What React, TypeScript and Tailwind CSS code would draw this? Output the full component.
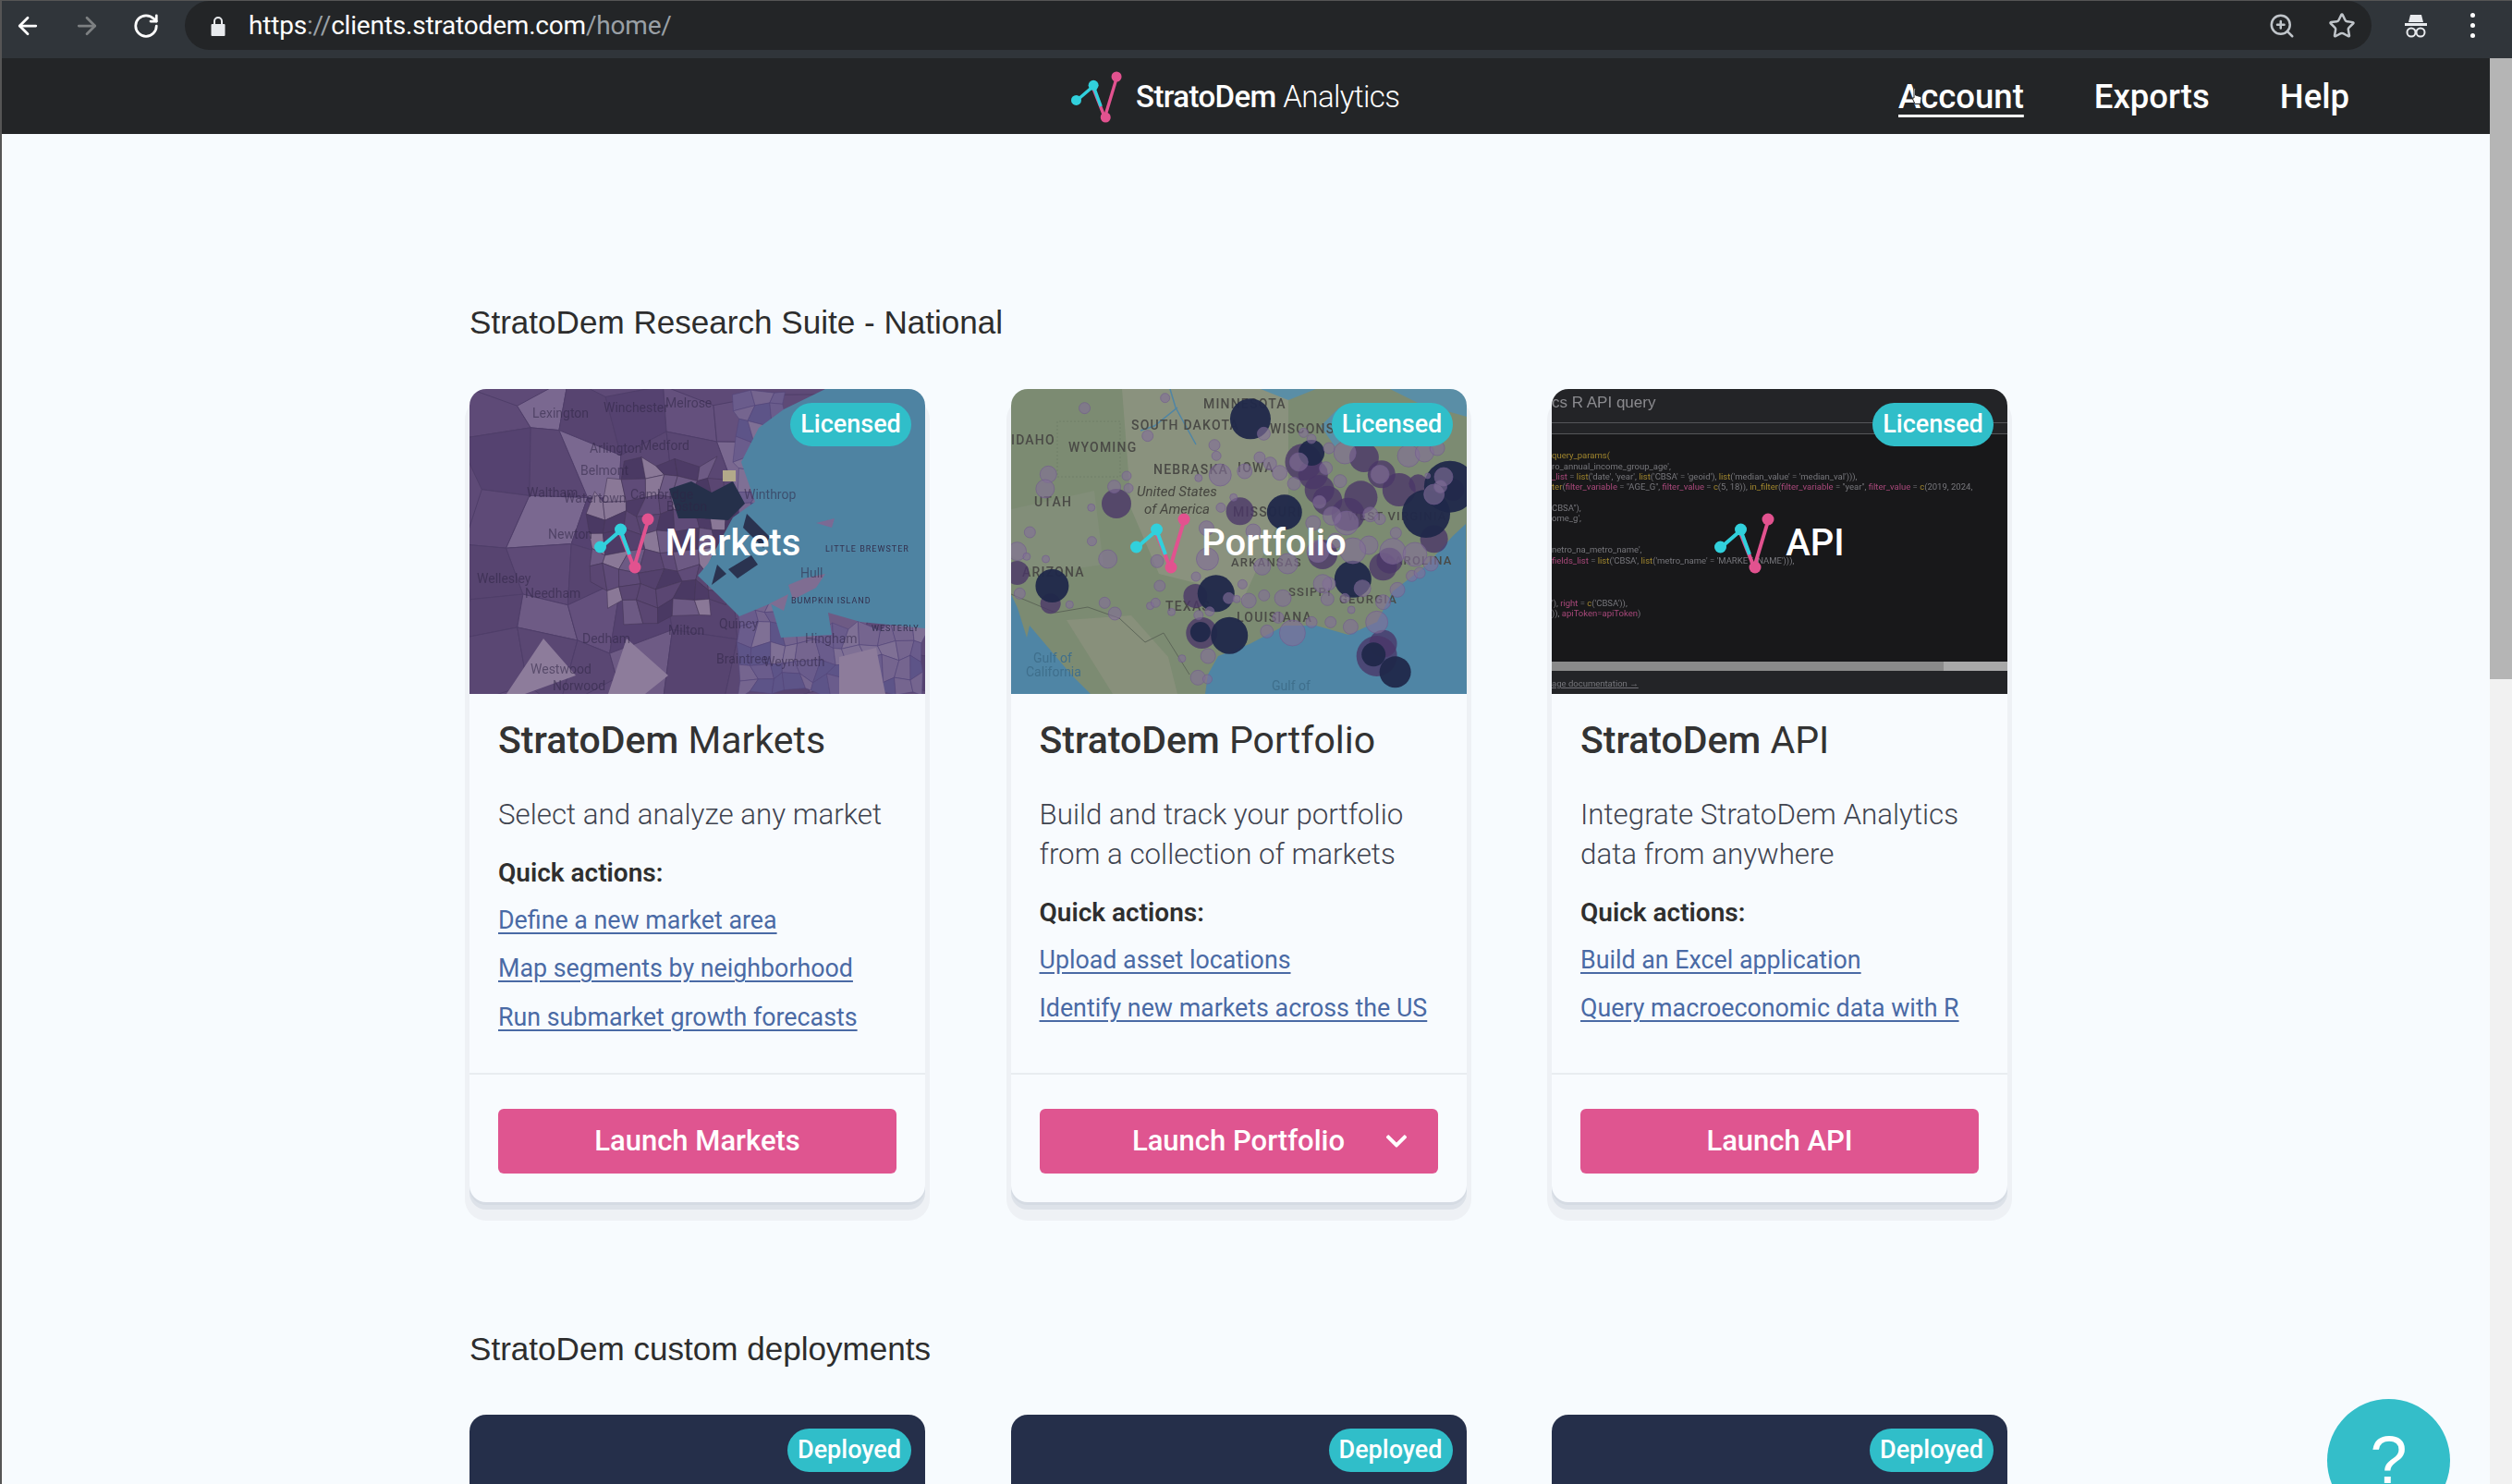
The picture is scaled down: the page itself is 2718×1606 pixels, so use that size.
import { ArrowLeft, ArrowRight, RotateCw, Star, ZoomIn } from 'lucide-react';
import { FaChevronDown } from 'react-icons/fa';

const BODY_FONT = 'font-["Roboto",sans-serif]';

function rng(seed: number) {
  let s = seed;
  return () => {
    s = (s * 16807) % 2147483647;
    return s / 2147483647;
  };
}

function cells(x0: number, y0: number, w: number, h: number, cols: number, rows: number, palette: string[], seed: number, inRegion?: (x: number, y: number) => boolean) {
  const r = rng(seed);
  const cw = w / cols;
  const ch = h / rows;
  const pts: [number, number][][] = [];
  for (let j = 0; j <= rows; j++) {
    const row: [number, number][] = [];
    for (let i = 0; i <= cols; i++) {
      row.push([x0 + i * cw + (r() - 0.5) * cw * 0.7, y0 + j * ch + (r() - 0.5) * ch * 0.7]);
    }
    pts.push(row);
  }
  const out: { d: string; fill: string }[] = [];
  for (let j = 0; j < rows; j++) {
    for (let i = 0; i < cols; i++) {
      const a = pts[j][i];
      const b = pts[j][i + 1];
      const c = pts[j + 1][i + 1];
      const e = pts[j + 1][i];
      const fill = palette[Math.floor(r() * palette.length)];
      if (inRegion && !inRegion((a[0] + c[0]) / 2, (a[1] + c[1]) / 2)) continue;
      out.push({ d: `M${a[0]} ${a[1]}L${b[0]} ${b[1]}L${c[0]} ${c[1]}L${e[0]} ${e[1]}Z`, fill });
    }
  }
  return out;
}

const COARSE = cells(0, 0, 493, 330, 9, 6, ['#5e4a77', '#5e4a77', '#574470', '#64507d', '#5a4773', '#6e5b85', '#554270', '#7a6890'], 1234);
const FINE = cells(130, 60, 170, 210, 9, 11, ['#4d3b66', '#5a4672', '#54416d', '#6d5a84', '#4a3963', '#5f4b78', '#8a7897'], 777, (x, y) => (x - 215) ** 2 + (y - 165) ** 2 < 7500);
const SHORE = cells(290, 0, 203, 330, 12, 18, ['#6a5c8c', '#75658f', '#5d5488', '#7f7095'], 4242, (x, y) => y > 255 || x < 340);

const MARKET_LABELS: [string, number, number][] = [
  ['Lexington', 68, 31], ['Winchester', 145, 25], ['Melrose', 212, 20], ['Medford', 185, 66], ['Arlington', 130, 69],
  ['Belmont', 120, 93], ['Waltham', 62, 117], ['Watertown', 102, 123], ['Newton', 85, 162], ['Cambridge', 174, 119],
  ['Boston', 213, 132], ['Winthrop', 297, 119], ['Wellesley', 8, 210], ['Needham', 60, 226], ['Dedham', 122, 275],
  ['Milton', 215, 266], ['Quincy', 270, 259], ['Hingham', 363, 275], ['Braintree', 267, 297], ['Weymouth', 318, 300],
  ['Westwood', 66, 308], ['Norwood', 90, 326], ['Hull', 358, 204],
];

function MarketsMap() {
  return (
    <svg viewBox="0 0 493 330" className="absolute inset-0 h-full w-full blur-[0.5px]">
      <rect width="493" height="330" fill="#5e4a77" />
      {COARSE.map((c, i) => <path key={i} d={c.d} fill={c.fill} stroke="#4f3e69" strokeWidth="1" />)}
      {FINE.map((c, i) => <path key={i} d={c.d} fill={c.fill} stroke="#453658" strokeWidth="0.6" />)}
      {SHORE.map((c, i) => <path key={i} d={c.d} fill={c.fill} stroke="#54477a" strokeWidth="0.6" />)}
      <path d="M385 0L340 22L313 42L294 79L309 122L285 139L258 189L247 202L268 222L292 246L326 232L337 269L392 266L388 242L423 252L493 259L493 0Z" fill="#4e83a2" />
      <path d="M216 108L240 100L262 112L285 100L298 124L280 142L250 140L226 140Z" fill="#25304a" />
      <path d="M300 135L325 160L318 172L296 150ZM280 195L305 180L312 190L290 205ZM268 190L278 200L262 212Z" fill="#2a3350" />
      <path d="M345 212L362 205L385 200L375 215L350 228ZM325 232L345 222L340 240Z" fill="#7f6d92" />
      <path d="M375 145L395 140L392 150ZM350 50L372 42L365 62Z" fill="#7b6a94" />
      <path d="M80 270L115 310L60 330L40 330ZM170 270L215 310L190 330L150 330ZM400 290L440 280L450 330L400 330Z" fill="#8d7c9b" />
      <rect x="274" y="88" width="14" height="12" fill="#b3a98a" />
      {MARKET_LABELS.map(([t, x, y]) => (
        <text key={t} x={x} y={y} fontSize="14" fontFamily="Roboto, sans-serif" fill="#2f2545" opacity="0.55">{t}</text>
      ))}
      <text x="385" y="176" fontSize="9" fontFamily="Roboto, sans-serif" fill="#33304e" letterSpacing="1">LITTLE BREWSTER</text>
      <text x="348" y="232" fontSize="9" fontFamily="Roboto, sans-serif" fill="#33304e" letterSpacing="1">BUMPKIN ISLAND</text>
      <text x="435" y="262" fontSize="9" fontFamily="Roboto, sans-serif" fill="#33304e" letterSpacing="1">WESTERLY</text>
    </svg>
  );
}

// x / y / radius taken from the reference crop
const SMALL_DOTS: [number, number, number][] = [
  [272, 95, 6], [525, 62, 5], [470, 185, 6], [680, 215, 6], [686, 250, 5], [822, 255, 6], [855, 275, 7], [775, 300, 8], [698, 312, 12], [630, 322, 4],
  [158, 310, 9], [148, 357, 10], [404, 315, 5], [410, 355, 5], [365, 350, 7], [100, 498, 6], [295, 527, 5], [293, 418, 4], [345, 585, 10], [60, 560, 10],
  [90, 577, 4], [150, 585, 4], [68, 697, 6], [225, 733, 4], [335, 727, 6], [367, 762, 7], [478, 737, 4], [495, 727, 5], [508, 672, 6], [500, 592, 7],
  [622, 642, 5], [768, 667, 5], [788, 720, 8], [836, 703, 6], [895, 712, 9], [740, 385, 4], [700, 418, 5], [655, 485, 8], [802, 495, 8], [658, 585, 12],
  [830, 610, 9], [910, 600, 11], [1005, 560, 12], [990, 468, 8], [1010, 400, 7], [1075, 332, 7], [1040, 225, 6], [1090, 240, 12], [985, 195, 5], [960, 175, 5],
  [835, 178, 7], [930, 340, 7], [885, 305, 8], [945, 270, 10], [1030, 290, 7], [1040, 665, 7], [1020, 665, 10], [1035, 715, 7], [1090, 712, 5], [1110, 750, 4],
  [1145, 680, 9], [1165, 540, 10], [1115, 558, 14], [1240, 560, 14], [1310, 570, 13], [1255, 685, 8], [1210, 725, 8], [1190, 790, 12], [1108, 805, 8], [1045, 790, 6],
  [985, 790, 6], [925, 825, 14], [845, 820, 7], [880, 775, 6], [630, 767, 5], [725, 712, 6], [750, 715, 4], [665, 755, 5], [660, 900, 8], [578, 908, 4],
  [628, 970, 8], [658, 975, 5], [545, 757, 4], [1360, 600, 8], [1300, 640, 6], [1325, 630, 6], [1370, 375, 11], [1400, 318, 10], [1350, 315, 3], [1390, 350, 7],
  [1170, 440, 8], [1200, 455, 6], [1250, 500, 6], [1095, 468, 13], [1050, 445, 10], [1200, 310, 10], [1290, 250, 12], [1340, 240, 10], [1380, 225, 8], [1060, 525, 8],
];

const MID_DOTS: [number, number, number][] = [
  [372, 405, 16], [760, 430, 15], [1035, 395, 16], [1100, 440, 18], [1260, 360, 18], [1205, 310, 15], [1150, 255, 16], [960, 270, 20], [1210, 860, 15], [1190, 900, 22],
  [640, 825, 17], [1020, 570, 16], [1210, 610, 15], [1370, 520, 15], [1430, 360, 12], [620, 705, 13], [165, 730, 11], [60, 630, 13], [1320, 340, 10], [1010, 360, 16],
  [1140, 385, 18], [1230, 590, 14], [990, 310, 16],
];

const DARK_DOTS: [number, number, number][] = [
  [793, 130, 22], [900, 433, 19], [685, 697, 20], [727, 833, 20], [170, 672, 18], [636, 822, 11], [1115, 650, 20], [1345, 438, 26], [1420, 350, 28], [1248, 952, 17], [1180, 895, 13], [985, 240, 14],
];

const PORTFOLIO_LABELS: [string, number, number, number][] = [
  ['MINNESOTA', 208, 21, 14], ['SOUTH DAKOTA', 130, 44, 14], ['WYOMING', 62, 68, 14], ['NEBRASKA', 154, 92, 14], ['IOWA', 245, 90, 14],
  ['UTAH', 25, 127, 14], ['MISSOURI', 240, 138, 14], ['WISCONSIN', 280, 48, 14], ['WEST VIRGINIA', 364, 142, 13], ['ARIZONA', 12, 203, 14],
  ['TEXAS', 167, 240, 14], ['LOUISIANA', 244, 252, 14], ['ARKANSAS', 238, 192, 13], ['IDAHO', 0, 60, 14], ['CAROLINA', 405, 190, 13], ['SSIPPI', 300, 224, 13], ['GEORGIA', 355, 232, 13],
];

function PortfolioMap() {
  const cx = (z: number) => (z - 41) / 2.904;
  const cy = (z: number) => (z - 33) / 3;
  return (
    <svg viewBox="0 0 493 330" className="absolute inset-0 h-full w-full blur-[0.5px]">
      <rect width="493" height="330" fill="#7c8b72" />
      <path d="M120 0L300 0L300 120L250 230L200 210L160 200L130 130Z" fill="#8a927e" />
      <path d="M0 130L90 110L100 190L30 200L0 180Z" fill="#828e79" />
      <path d="M60 250L130 245L170 290L180 330L110 330Z" fill="#88907b" />
      <path d="M210 330L213 309L224 289L258 276L296 256L330 256L365 266L396 252L413 219L448 192L478 159L492 146L493 330Z" fill="#4f85a5" />
      <path d="M0 222L7 237L17 269L20 256L65 309L86 330L0 330Z" fill="#4f85a5" />
      <path d="M270 0L330 0L300 12ZM335 40L355 20L372 45L350 62ZM410 0L493 0L493 30L440 15Z" fill="#5a8ea6" />
      <path d="M172 0L178 20L200 60M140 45L155 40L180 20" fill="none" stroke="#4f85a5" strokeWidth="1.5" />
      <path d="M0 222L48 242L83 236L117 248L145 274L165 264L193 309" fill="none" stroke="#5d6658" strokeWidth="1" />
      <path d="M50 35L50 95L118 95L118 35Z" fill="none" stroke="#6f7d66" strokeWidth="0.7" strokeDasharray="2 2" />
      {PORTFOLIO_LABELS.map(([t, x, y, s]) => (
        <text key={t} x={x} y={y} fontSize={s} fontWeight="500" letterSpacing="1.2" fontFamily="Roboto, sans-serif" fill="#4a4a46">{t}</text>
      ))}
      <text x="136" y="116" fontSize="15" fontStyle="italic" fontFamily="Roboto, sans-serif" fill="#45453f">United States</text>
      <text x="144" y="135" fontSize="15" fontStyle="italic" fontFamily="Roboto, sans-serif" fill="#45453f">of America</text>
      <text x="24" y="296" fontSize="14" fontFamily="Roboto, sans-serif" fill="#3f6f8c">Gulf of</text>
      <text x="16" y="311" fontSize="14" fontFamily="Roboto, sans-serif" fill="#3f6f8c">California</text>
      <text x="282" y="326" fontSize="14" fontFamily="Roboto, sans-serif" fill="#3f6f8c">Gulf of</text>
      {MID_DOTS.map(([x, y, r], i) => <circle key={i} cx={cx(x)} cy={cy(y)} r={r} fill="#4a3668" fillOpacity="0.78" />)}
      {DARK_DOTS.map(([x, y, r], i) => <circle key={i} cx={cx(x)} cy={cy(y)} r={r} fill="#20284a" fillOpacity="0.95" />)}
      {SMALL_DOTS.map(([x, y, r], i) => <circle key={i} cx={cx(x)} cy={cy(y)} r={r} fill="#826f98" fillOpacity="0.62" stroke="#705a8e" strokeWidth="0.6" />)}
    </svg>
  );
}

function ApiShot() {
  const font = 'Roboto, sans-serif';
  const pink = '#a8487a';
  const gold = '#a0862e';
  const grey = '#77777c';
  return (
    <svg viewBox="0 0 493 330" className="absolute inset-0 h-full w-full blur-[0.3px]">
      <rect width="493" height="330" fill="#18181a" />
      <rect width="493" height="48" fill="#232427" />
      <path d="M0 36.500H493M0 48.500H493" stroke="#55565a" strokeWidth="1" />
      <text x="0" y="20" fontSize="17" fontFamily="Liberation Sans, sans-serif" fill="#8b8b8f">cs R API query</text>
      <g fontSize="9.500" fontFamily={font} fill={grey} className="whitespace-pre">
        <text x="0" y="75" fill={gold}>query_params(</text>
        <text x="0" y="87">ro_annual_income_group_age',</text>
        <text x="0" y="98"><tspan fill={pink}>_list</tspan>  =  <tspan fill={gold}>list</tspan>('date',  'year',  <tspan fill={gold}>list</tspan>('CBSA'  =  'geoid'),  <tspan fill={gold}>list</tspan>('median_value'  =  'median_val'))),</text>
        <text x="0" y="109"><tspan fill={gold}>ter</tspan>(<tspan fill={pink}>filter_variable</tspan>  =  "AGE_G",  <tspan fill={pink}>filter_value</tspan>  =  <tspan fill={gold}>c</tspan>(5,  18)),  <tspan fill={gold}>in_filter</tspan>(<tspan fill={pink}>filter_variable</tspan>  =  "year",  <tspan fill={pink}>filter_value</tspan>  =  <tspan fill={gold}>c</tspan>(2019,  2024,</text>
        <text x="0" y="132">CBSA"),</text>
        <text x="0" y="143">ome_g',</text>
        <text x="0" y="177">netro_na_metro_name',</text>
        <text x="0" y="189"><tspan fill={pink}>fields_list</tspan>  =  <tspan fill={gold}>list</tspan>('CBSA',  <tspan fill={gold}>list</tspan>('metro_name'  =  'MARKET_NAME'))),</text>
        <text x="0" y="235">'),  <tspan fill={pink}>right</tspan>  =  <tspan fill={gold}>c</tspan>('CBSA')),</text>
        <text x="0" y="246">)),  <tspan fill={pink}>apiToken=apiToken</tspan>)</text>
      </g>
      <rect y="295" width="493" height="10" fill="#8a8a8a" />
      <rect x="424" y="295" width="69" height="10" fill="#a8a8a8" />
      <rect y="305" width="493" height="25" fill="#232427" />
      <text x="0" y="322" fontSize="9.500" textDecoration="underline" fontFamily={font} fill="#77777c">age documentation →</text>
    </svg>
  );
}

function Logo({ className }: { className: string }) {
  return (
    <svg viewBox="0 0 65 66" className={className}>
      <path d="M43 59L58 9" stroke="#e2528f" strokeWidth="4" fill="none" />
      <path d="M27 19L43 59" stroke="#e2528f" strokeWidth="4" fill="none" />
      <path d="M6.500 38L28.500 19L38 45" stroke="#31d0dc" strokeWidth="4" fill="none" />
      <circle cx="6.500" cy="37" r="6.500" fill="#31d0dc" />
      <circle cx="28.500" cy="18" r="6.500" fill="#31d0dc" />
      <circle cx="44" cy="59" r="6.500" fill="#e2528f" />
      <circle cx="58" cy="7" r="6.500" fill="#e2528f" />
    </svg>
  );
}

function Badge({ label, className }: { label: string; className: string }) {
  return (
    <span className={`absolute top-[15px] right-[15px] flex h-[47px] items-center justify-center rounded-full bg-[#30bec9] text-[27px] font-medium text-white ${BODY_FONT} ${className}`}>
      {label}
    </span>
  );
}

function ChromeBar() {
  return (
    <div className="flex h-[63px] shrink-0 items-start border-t-[1px] border-l-[2px] border-[#555] bg-[#30353a]">
      <div className="flex h-[53px] w-[198px] shrink-0 items-center pl-[13px] text-white">
        <ArrowLeft size={30} strokeWidth={2.2} />
        <ArrowRight size={30} strokeWidth={2.2} className="ml-[34px] text-[#7d8082]" />
        <RotateCw size={30} strokeWidth={2.2} className="ml-[34px]" />
      </div>
      <div className="flex h-[53px] w-[2366px] shrink-0 items-center rounded-[28px] bg-[#232527] pl-[28px]">
        <svg viewBox="0 0 16 22" className="h-[22px] w-[16px] text-[#e8eaed]" fill="currentColor">
          <path d="M3 9V6a5 5 0 0 1 10 0v3h1.500a1 1 0 0 1 1 1v11a1 1 0 0 1-1 1h-13a1 1 0 0 1-1-1V10a1 1 0 0 1 1-1zm2 0h6V6a3 3 0 0 0-6 0z" />
        </svg>
        <span className={`ml-[25px] text-[28px] tracking-[-0.2px] text-white ${BODY_FONT}`}>
          https<span className="text-[#9aa0a6]">://</span>clients.stratodem.com<span className="text-[#9aa0a6]">/home/</span>
        </span>
        <div className="ml-auto flex items-center pr-[17px] text-[#c0c5ca]">
          <ZoomIn size={30} strokeWidth={2} />
          <Star size={30} strokeWidth={2} className="ml-[35px]" />
        </div>
      </div>
      <div className="flex h-[53px] items-center pl-[33px] text-[#e8eaed]">
        <svg viewBox="0 0 30 30" className="h-[30px] w-[30px]" fill="none" stroke="currentColor">
          <path d="M9 3h12l2 8H7z" fill="currentColor" stroke="none" />
          <rect x="3" y="12" width="24" height="3" fill="currentColor" stroke="none" />
          <circle cx="10" cy="22" r="4.500" strokeWidth="2" />
          <circle cx="20" cy="22" r="4.500" strokeWidth="2" />
        </svg>
        <div className="ml-[44px] flex flex-col gap-[6px]">
          <span className="h-[5px] w-[5px] rounded-full bg-white" />
          <span className="h-[5px] w-[5px] rounded-full bg-white" />
          <span className="h-[5px] w-[5px] rounded-full bg-white" />
        </div>
      </div>
    </div>
  );
}

function NavBar() {
  return (
    <nav className={`flex h-[82px] shrink-0 items-center border-l-[2px] border-[#555] bg-[#232527] pt-[2px] pl-[1157px] text-white ${BODY_FONT}`}>
      <Logo className="h-[56px] w-[55px]" />
      <span className="ml-[15px] text-[33px] tracking-[-0.6px]">
        <span className="font-medium">StratoDem</span> <span className="font-light">Analytics</span>
      </span>
      <div className="ml-auto flex items-center gap-[76px] pr-[152px] text-[36.500px] font-medium">
        <span className="relative underline decoration-[3px] underline-offset-[7px]">
          Account
          <svg viewBox="0 0 12 20" className="absolute top-[16px] left-[14px] h-[20px] w-[12px]">
            <path d="M3 1.500c1 0 1.500.5 1.500 1.500v6l5 1.500c1 .3 1.500 1 1.500 2l-1 6H4L1 12l2 0z" fill="#fff" stroke="#222" strokeWidth="1" />
          </svg>
        </span>
        <span>Exports</span>
        <span>Help</span>
      </div>
    </nav>
  );
}

type Product = {
  name: string;
  desc: string[];
  links: string[];
  art: React.ReactNode;
  chevron?: boolean;
};

const PRODUCTS: Product[] = [
  {
    name: 'Markets',
    desc: ['Select and analyze any market'],
    links: ['Define a new market area', 'Map segments by neighborhood', 'Run submarket growth forecasts'],
    art: <MarketsMap />,
  },
  {
    name: 'Portfolio',
    desc: ['Build and track your portfolio', 'from a collection of markets'],
    links: ['Upload asset locations', 'Identify new markets across the US'],
    art: <PortfolioMap />,
    chevron: true,
  },
  {
    name: 'API',
    desc: ['Integrate StratoDem Analytics', 'data from anywhere'],
    links: ['Build an Excel application', 'Query macroeconomic data with R'],
    art: <ApiShot />,
  },
];

function ProductCard({ product }: { product: Product }) {
  return (
    <div className={`flex h-[880px] flex-col rounded-[18px] bg-[#f8fbfe] shadow-[0_3px_0_0_#d5dbe3,0_8px_0_0_#dde2e9,0_15px_0_5px_#eef1f5] ${BODY_FONT}`}>
      <div className="relative h-[330px] shrink-0 overflow-hidden rounded-t-[18px]">
        {product.art}
        <Badge label="Licensed" className="w-[131px]" />
        <div className="absolute inset-0 flex items-center justify-center gap-[12px] pt-[4px]">
          <Logo className="h-[66px] w-[65px]" />
          <span className="text-[40px] font-medium text-white">{product.name}</span>
        </div>
      </div>
      <div className="flex-1 px-[31px] pt-[30px]">
        <h3 className="text-[41px] leading-[40px] text-[#333]">
          <span className="font-medium">StratoDem</span> {product.name}
        </h3>
        <p className="mt-[39px] text-[31.300px] leading-[43px] font-light text-[#3f4450]">
          {product.desc.map((line) => <span key={line} className="block">{line}</span>)}
        </p>
        <p className="mt-[27px] text-[28px] leading-[30px] font-semibold text-[#2f2f2f]">Quick actions:</p>
        <div className="mt-[21px] flex flex-col gap-[22.4px]">
          {product.links.map((l) => (
            <a key={l} className="text-[26.800px] leading-[30px] text-[#4a6aa5] underline underline-offset-[4px]">{l}</a>
          ))}
        </div>
      </div>
      <div className="border-t-[2px] border-[#e8ecf0] px-[31px] pt-[37px] pb-[31px]">
        <button className="relative flex h-[70px] w-full items-center justify-center rounded-[6px] bg-[#df5590] text-[31px] font-medium text-white">
          Launch {product.name}
          {product.chevron && <FaChevronDown className="absolute top-[22px] right-[32px] text-[26px]" />}
        </button>
      </div>
    </div>
  );
}

export default function App() {
  return (
    <div className="relative flex h-[1606px] w-[2718px] flex-col overflow-hidden bg-[#f7fbfe]">
      <ChromeBar />
      <div className="flex min-h-0 flex-1">
        <div className="flex min-w-0 flex-1 flex-col">
          <NavBar />
          <main className="overflow-hidden border-l-[2px] border-[#555] pt-[182px] pl-[506px]">
            <h2 className="font-['Liberation_Sans',sans-serif] text-[35.100px] leading-[44px] text-[#2d2d2d]">StratoDem Research Suite - National</h2>
            <div className="mt-[50px] grid w-[1664px] grid-cols-3 gap-x-[92.5px]">
              {PRODUCTS.map((p) => <ProductCard key={p.name} product={p} />)}
            </div>
            <h2 className="mt-[137px] font-['Liberation_Sans',sans-serif] text-[35.100px] leading-[44px] text-[#2d2d2d]">StratoDem custom deployments</h2>
            <div className="mt-[49px] grid w-[1664px] grid-cols-3 gap-x-[92.5px]">
              {[0, 1, 2].map((i) => (
                <div key={i} className="relative h-[330px] rounded-t-[18px] bg-[#252f4a]">
                  <Badge label="Deployed" className="w-[134px]" />
                </div>
              ))}
            </div>
          </main>
        </div>
        <div className="w-[24px] shrink-0 bg-[#f1f1f1]">
          <div className="h-[672px] bg-[#b5b5b5]" />
        </div>
      </div>
      <div className="absolute top-[1514px] left-[2518px] flex h-[133px] w-[133px] items-center justify-center rounded-full bg-[#34bec9] pb-[2px] font-['Liberation_Sans',sans-serif] text-[72px] text-white">
        ?
      </div>
    </div>
  );
}
